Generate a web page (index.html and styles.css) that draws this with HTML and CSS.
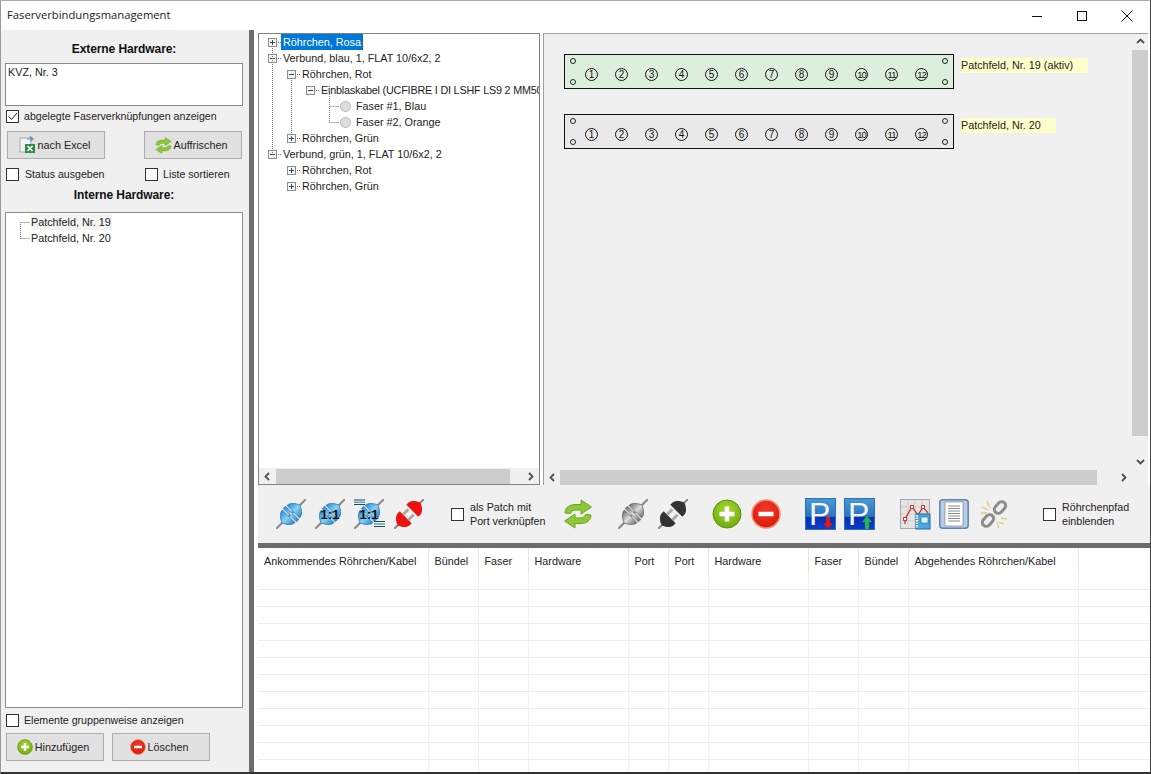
FILE: index.html
```html
<!DOCTYPE html>
<html lang="de">
<head>
<meta charset="utf-8">
<title>Faserverbindungsmanagement</title>
<link rel="stylesheet" href="styles.css">
</head>
<body>
<svg class="defs" width="0" height="0" aria-hidden="true">
  <defs>
    <linearGradient id="gb" x1="0" x2="1" y1="0" y2="0"><stop offset="0" stop-color="#2c8ad2"/><stop offset=".5" stop-color="#86d2f6"/><stop offset="1" stop-color="#2a86cc"/></linearGradient>
    <linearGradient id="gg" x1="0" x2="1" y1="0" y2="0"><stop offset="0" stop-color="#6c6c6c"/><stop offset=".5" stop-color="#dcdcdc"/><stop offset="1" stop-color="#707070"/></linearGradient>
    <linearGradient id="gp1" x1="0" x2="0" y1="0" y2="1"><stop offset="0" stop-color="#4a9ad6"/><stop offset=".58" stop-color="#2a74c0"/><stop offset=".6" stop-color="#0a2db4"/><stop offset="1" stop-color="#0a3fc8"/></linearGradient>
    <radialGradient id="gplus" cx=".5" cy=".35" r=".7"><stop offset="0" stop-color="#a8d832"/><stop offset="1" stop-color="#6aa808"/></radialGradient>
    <radialGradient id="gminus" cx=".5" cy=".35" r=".7"><stop offset="0" stop-color="#f43a2a"/><stop offset="1" stop-color="#d81808"/></radialGradient>
    <symbol id="plug" viewBox="0 0 32 32">
      <g transform="rotate(45 16 16)">
        <path d="M16 -7V39" stroke="#8a8a8a" stroke-width="2.200"/>
        <path d="M6.500 12.500C6.500 8 12 4 16 2.500C20 4 25.500 8 25.500 12.500Z" fill="url(#gb)" stroke="#1f6da8" stroke-width=".7"/>
        <rect x="6" y="14.200" width="20" height="3.600" fill="url(#gb)" stroke="#1f6da8" stroke-width=".6"/>
        <path d="M6.500 19.500C6.500 24 12 28 16 29.500C20 28 25.500 24 25.500 19.500Z" fill="url(#gb)" stroke="#1f6da8" stroke-width=".7"/>
      </g>
    </symbol>
    <symbol id="plug-grey" viewBox="0 0 32 32">
      <g transform="rotate(45 16 16)">
        <path d="M16 -7V39" stroke="#8a8a8a" stroke-width="2.200"/>
        <path d="M6.500 12.500C6.500 8 12 4 16 2.500C20 4 25.500 8 25.500 12.500Z" fill="url(#gg)" stroke="#5c5c5c" stroke-width=".7"/>
        <rect x="6" y="14.200" width="20" height="3.600" fill="url(#gg)" stroke="#5c5c5c" stroke-width=".6"/>
        <path d="M6.500 19.500C6.500 24 12 28 16 29.500C20 28 25.500 24 25.500 19.500Z" fill="url(#gg)" stroke="#5c5c5c" stroke-width=".7"/>
      </g>
    </symbol>
    <symbol id="plug-open" viewBox="0 0 32 32">
      <g transform="rotate(45 16 16)">
        <path d="M16 -7V2M16 30V39" stroke="#8a8a8a" stroke-width="2.200"/>
        <path d="M7 8C7 4 12 0 16 -1C20 0 25 4 25 8V11H7Z" fill="currentColor"/>
        <path d="M7 24C7 28 12 32 16 33C20 32 25 28 25 24V21H7Z" fill="currentColor"/>
        <path d="M12 21V13M20 21V13" stroke="#a8a8a8" stroke-width="3"/>
      </g>
    </symbol>
    <symbol id="plus" viewBox="0 0 30 30">
      <circle cx="15" cy="15" r="14" fill="url(#gplus)" stroke="#5a9408"/>
      <path d="M15 7.500V22.500M7.500 15H22.500" stroke="#fff" stroke-width="4.500"/>
    </symbol>
    <symbol id="minus" viewBox="0 0 30 30">
      <circle cx="15" cy="15" r="14" fill="url(#gminus)" stroke="#f0907a" stroke-width="1.500"/>
      <path d="M7.500 15H22.500" stroke="#fff" stroke-width="4.500"/>
    </symbol>
    <symbol id="refresh" viewBox="0 0 30 30">
      <path d="M2 14C2 8 7 5.500 13 5.500H18V1L28.500 8 18 15V11H13C10 11 8.500 12 7.500 14.500Z" fill="#8cc83a" stroke="#68a818"/>
      <path d="M28 16C28 22 23 24.500 17 24.500H12V29L1.500 22 12 15V19H17C20 19 21.500 18 22.500 15.500Z" fill="#8cc83a" stroke="#68a818"/>
    </symbol>
    <symbol id="minus-box" viewBox="0 0 9 9">
      <rect x=".5" y=".5" width="8" height="8" fill="#f4f4f4" stroke="#8e8e8e"/>
      <path d="M2 4.500H7" stroke="#444"/>
    </symbol>
    <symbol id="plus-box" viewBox="0 0 9 9">
      <rect x=".5" y=".5" width="8" height="8" fill="#f4f4f4" stroke="#8e8e8e"/>
      <path d="M2 4.500H7M4.500 2V7" stroke="#444"/>
    </symbol>
    <symbol id="ch-left" viewBox="0 0 9 9"><path d="M6 1L2.500 4.500L6 8" fill="none" stroke="#505050" stroke-width="1.800"/></symbol>
    <symbol id="ch-right" viewBox="0 0 9 9"><path d="M3 1L6.500 4.500L3 8" fill="none" stroke="#505050" stroke-width="1.800"/></symbol>
    <symbol id="ch-up" viewBox="0 0 9 9"><path d="M1 6L4.500 2.500L8 6" fill="none" stroke="#505050" stroke-width="1.800"/></symbol>
    <symbol id="ch-down" viewBox="0 0 9 9"><path d="M1 3L4.500 6.500L8 3" fill="none" stroke="#505050" stroke-width="1.800"/></symbol>
  </defs>
</svg>

<div class="window">
  <header class="titlebar">
    <span class="title">Faserverbindungsmanagement</span>
    <div class="wincontrols">
      <span class="winbtn"><svg width="12" height="12" viewBox="0 0 12 12"><path d="M1 6.500H11" stroke="#111"/></svg></span>
      <span class="winbtn"><svg width="12" height="12" viewBox="0 0 12 12"><rect x="1.500" y="1.500" width="9" height="9" fill="none" stroke="#111"/></svg></span>
      <span class="winbtn"><svg width="12" height="12" viewBox="0 0 12 12"><path d="M.5 .5L11.500 11.500M11.500 .5L.5 11.500" stroke="#111"/></svg></span>
    </div>
  </header>

  <div class="body">
    <aside class="sidebar">
      <h2 class="heading heading-first">Externe Hardware:</h2>
      <div class="textbox">KVZ, Nr. 3</div>
      <label class="check check-a"><span class="box"><svg width="11" height="11" viewBox="0 0 11 11"><path d="M1.500 5.500L4.500 8.500L10 2" fill="none" stroke="#222"/></svg></span>abgelegte Faserverknüpfungen anzeigen</label>
      <div class="btnrow btnrow-a">
        <button class="btn"><svg width="18" height="18" viewBox="0 0 18 18"><rect x="2" y="2" width="11" height="14" fill="#f4f4f4" stroke="#a8a8a8"/><path d="M9 3L14 2.500M12 .5L15 3L12 5" fill="none" stroke="#5a8fc0" stroke-width="1.200"/><rect x="7" y="8" width="10" height="9" fill="#2e8b4a"/><path d="M9.500 10L14.500 15M14.500 10L9.500 15" stroke="#fff" stroke-width="1.500"/></svg>nach Excel</button>
        <button class="btn"><svg width="17" height="17"><use href="#refresh"/></svg>Auffrischen</button>
      </div>
      <div class="checkrow">
        <label class="check"><span class="box"></span>Status ausgeben</label>
        <label class="check"><span class="box"></span>Liste sortieren</label>
      </div>
      <h2 class="heading heading-second">Interne Hardware:</h2>
      <div class="listbox">
        <svg class="connectors" width="24" height="40" aria-hidden="true"><path d="M14.500 9V26M14.500 9.500H24M14.500 25.500H24" fill="none" stroke="#777" stroke-dasharray="1 1"/></svg>
        <div class="listitem listitem-sel">Patchfeld, Nr. 19</div>
        <div class="listitem">Patchfeld, Nr. 20</div>
      </div>
      <label class="check check-b"><span class="box"></span>Elemente gruppenweise anzeigen</label>
      <div class="btnrow btnrow-b">
        <button class="btn"><svg width="16" height="16"><use href="#plus"/></svg>Hinzufügen</button>
        <button class="btn"><svg width="16" height="16"><use href="#minus"/></svg>Löschen</button>
      </div>
    </aside>

    <div class="vsplit"></div>

    <main class="main">
      <div class="top">
        <section class="tree">
          <div class="treebody">
            <svg class="connectors" width="120" height="170" aria-hidden="true">
              <path d="M13.500 12V120.500M32.500 44V104M70.500 60V88.500M17 8.500H22M17 24.500H22M36 40.500H41M55 56.500H60M70.500 72.500H80M70.500 88.500H80M36 104.500H41M17 120.500H22M36 136.500H41M36 152.500H41" fill="none" stroke="#777" stroke-dasharray="1 1"/>
            </svg>
            <div class="node"><svg class="tg" width="9" height="9"><use href="#plus-box"/></svg><span class="sel">Röhrchen, Rosa</span></div>
            <div class="node"><svg class="tg" width="9" height="9"><use href="#minus-box"/></svg><span>Verbund, blau, 1, FLAT 10/6x2, 2</span></div>
            <div class="node lv1"><svg class="tg" width="9" height="9"><use href="#minus-box"/></svg><span>Röhrchen, Rot</span></div>
            <div class="node lv2"><svg class="tg" width="9" height="9"><use href="#minus-box"/></svg><span class="longname">Einblaskabel (UCFIBRE I DI LSHF LS9 2 MM50/125 OM3)</span></div>
            <div class="node lv3"><i class="led"></i><span>Faser #1, Blau</span></div>
            <div class="node lv3"><i class="led"></i><span>Faser #2, Orange</span></div>
            <div class="node lv1"><svg class="tg" width="9" height="9"><use href="#plus-box"/></svg><span>Röhrchen, Grün</span></div>
            <div class="node"><svg class="tg" width="9" height="9"><use href="#minus-box"/></svg><span>Verbund, grün, 1, FLAT 10/6x2, 2</span></div>
            <div class="node lv1"><svg class="tg" width="9" height="9"><use href="#plus-box"/></svg><span>Röhrchen, Rot</span></div>
            <div class="node lv1"><svg class="tg" width="9" height="9"><use href="#plus-box"/></svg><span>Röhrchen, Grün</span></div>
          </div>
          <div class="hbar">
            <svg class="arrow"><use href="#ch-left"/></svg><span class="thumb thumb-tree"></span><svg class="arrow arrow-end"><use href="#ch-right"/></svg>
          </div>
        </section>

        <section class="canvas">
          <div class="canvasbody">
            <div class="patchrow">
              <div class="panel panel-active">
                <div class="holes"><i></i><i></i></div>
                <div class="ports"><b>1</b><b>2</b><b>3</b><b>4</b><b>5</b><b>6</b><b>7</b><b>8</b><b>9</b><b class="n2">10</b><b class="n2">11</b><b class="n2">12</b></div>
                <div class="holes"><i></i><i></i></div>
              </div>
              <span class="tag tag-a">Patchfeld, Nr. 19 (aktiv)</span>
            </div>
            <div class="patchrow">
              <div class="panel">
                <div class="holes"><i></i><i></i></div>
                <div class="ports"><b>1</b><b>2</b><b>3</b><b>4</b><b>5</b><b>6</b><b>7</b><b>8</b><b>9</b><b class="n2">10</b><b class="n2">11</b><b class="n2">12</b></div>
                <div class="holes"><i></i><i></i></div>
              </div>
              <span class="tag tag-b">Patchfeld, Nr. 20</span>
            </div>
          </div>
          <div class="vbar">
            <svg class="arrow-v"><use href="#ch-up"/></svg><span class="thumb thumb-v"></span><svg class="arrow-v arrow-v-end"><use href="#ch-down"/></svg>
          </div>
          <div class="hbar">
            <svg class="arrow"><use href="#ch-left"/></svg><span class="thumb thumb-canvas"></span><svg class="arrow arrow-end"><use href="#ch-right"/></svg>
          </div>
          <div class="corner"></div>
        </section>
      </div>

      <div class="toolbar">
        <svg class="ic"><use href="#plug"/></svg>
        <svg class="ic" viewBox="0 0 30 30"><use href="#plug" width="30" height="30"/><text x="15" y="20" class="onetoone">1:1</text></svg>
        <svg class="ic" viewBox="0 0 30 30"><use href="#plug" width="30" height="30"/><text x="15" y="20" class="onetoone">1:1</text><path d="M0 1H11M0 5.500H11" stroke="#1c3f9c"/><path d="M0 3.200H11" stroke="#1f8a3c"/><path d="M20 22.500H31M20 27.500H31" stroke="#1c3f9c"/><path d="M20 25H31" stroke="#1f8a3c"/></svg>
        <svg class="ic ic-red"><use href="#plug-open"/></svg>
        <label class="check toolcheck tc-a"><span class="box"></span><span class="two">als Patch mit<br>Port verknüpfen</span></label>
        <svg class="ic ic-refresh"><use href="#refresh"/></svg>
        <svg class="ic ic-greyplug"><use href="#plug-grey"/></svg>
        <svg class="ic ic-black"><use href="#plug-open"/></svg>
        <svg class="ic ic-plus"><use href="#plus"/></svg>
        <svg class="ic"><use href="#minus"/></svg>
        <svg class="ic-p ic-p1" width="31" height="32" viewBox="0 0 31 32">
          <rect x=".5" y=".5" width="30" height="31" fill="url(#gp1)" stroke="#2f6fb8"/>
          <text x="4" y="27" class="ptxt">P</text>
          <path d="M21 19H25V25H28L23 31 18 25H21Z" fill="#e01818"/>
        </svg>
        <svg class="ic-p ic-p2" width="31" height="32" viewBox="0 0 31 32">
          <rect x=".5" y=".5" width="30" height="31" fill="url(#gp1)" stroke="#2f6fb8"/>
          <text x="4" y="27" class="ptxt">P</text>
          <path d="M21 31H25V24H28L23 18 18 24H21Z" fill="#22b84a"/>
        </svg>
        <svg class="ic ic-chart" viewBox="0 0 30 30">
          <rect x=".5" y=".5" width="29" height="29" fill="#e4e4e4" stroke="#a8a8a8"/>
          <path d="M8 1V29M15 1V29M22 1V29M1 8H29M1 15H29M1 22H29" stroke="#cfcfcf"/>
          <path d="M5 25L5 20L12 8L18 16L23 8L28 14" fill="none" stroke="#c83838" stroke-width="1.300"/>
          <rect x="3.500" y="18.500" width="3" height="3" fill="#fff" stroke="#c83838"/>
          <rect x="10.500" y="6.500" width="3" height="3" fill="#fff" stroke="#c83838"/>
          <rect x="21.500" y="6.500" width="3" height="3" fill="#fff" stroke="#c83838"/>
          <rect x="16" y="15" width="14" height="15" fill="#4aa8dc" stroke="#1c6ca8"/>
          <path d="M17 16V29" stroke="#fff" stroke-width="2" stroke-dasharray="1.500 1"/>
          <rect x="21" y="18" width="7" height="6" fill="#dff0fa" stroke="#1c6ca8" stroke-width=".6"/>
        </svg>
        <svg class="ic" viewBox="0 0 30 30">
          <rect x=".8" y=".8" width="28.400" height="28.400" rx="3" fill="#b8cde4" stroke="#5f86ad" stroke-width="1.500"/>
          <rect x="6" y="3" width="18" height="24" fill="#fff" stroke="#7a7a7a" stroke-width=".6"/>
          <path d="M9 7H21M9 9.500H21M9 12H21M9 14.500H21M9 17H21M9 19.500H21M9 22H21" stroke="#8a8a8a"/>
        </svg>
        <svg class="ic ic-link" viewBox="0 0 30 30">
          <g fill="none" stroke="#8c8c8c" stroke-width="3">
            <rect x="17" y="2" width="8" height="13" rx="4" transform="rotate(42 21 8.500)"/>
            <rect x="5" y="15" width="8" height="13" rx="4" transform="rotate(42 9 21.500)"/>
          </g>
          <path d="M3 8L9 11M8 2L11 9M2 14H8M19 23L25 25M22 19L28 20M18 24L20 29" stroke="#e8c878" stroke-width="1.300"/>
        </svg>
        <label class="check toolcheck tc-b"><span class="box"></span><span class="two">Röhrchenpfad<br>einblenden</span></label>
      </div>

      <div class="hsplit"></div>

      <table class="grid">
        <colgroup>
          <col class="c170"><col class="c50"><col class="c50"><col class="c100"><col class="c40"><col class="c40"><col class="c100"><col class="c50"><col class="c50"><col class="c170"><col>
        </colgroup>
        <thead>
          <tr><th>Ankommendes Röhrchen/Kabel</th><th>Bündel</th><th>Faser</th><th>Hardware</th><th>Port</th><th>Port</th><th>Hardware</th><th>Faser</th><th>Bündel</th><th>Abgehendes Röhrchen/Kabel</th><th></th></tr>
        </thead>
        <tbody>
          <tr><td></td><td></td><td></td><td></td><td></td><td></td><td></td><td></td><td></td><td></td><td></td></tr>
          <tr><td></td><td></td><td></td><td></td><td></td><td></td><td></td><td></td><td></td><td></td><td></td></tr>
          <tr><td></td><td></td><td></td><td></td><td></td><td></td><td></td><td></td><td></td><td></td><td></td></tr>
          <tr><td></td><td></td><td></td><td></td><td></td><td></td><td></td><td></td><td></td><td></td><td></td></tr>
          <tr><td></td><td></td><td></td><td></td><td></td><td></td><td></td><td></td><td></td><td></td><td></td></tr>
          <tr><td></td><td></td><td></td><td></td><td></td><td></td><td></td><td></td><td></td><td></td><td></td></tr>
          <tr><td></td><td></td><td></td><td></td><td></td><td></td><td></td><td></td><td></td><td></td><td></td></tr>
          <tr><td></td><td></td><td></td><td></td><td></td><td></td><td></td><td></td><td></td><td></td><td></td></tr>
          <tr><td></td><td></td><td></td><td></td><td></td><td></td><td></td><td></td><td></td><td></td><td></td></tr>
          <tr><td></td><td></td><td></td><td></td><td></td><td></td><td></td><td></td><td></td><td></td><td></td></tr>
          <tr><td></td><td></td><td></td><td></td><td></td><td></td><td></td><td></td><td></td><td></td><td></td></tr>
          <tr class="lastrow"><td></td><td></td><td></td><td></td><td></td><td></td><td></td><td></td><td></td><td></td><td></td></tr>
        </tbody>
      </table>
    </main>
  </div>
</div>
</body>
</html>
```
FILE: styles.css
```css
* { box-sizing: border-box; }
html, body { margin: 0; padding: 0; height: 100%; overflow: hidden; background: #fff; }
body { font: 10.800px/14px "Liberation Sans", Arial, sans-serif; color: #222; }
.defs { position: absolute; }

.window {
  width: 1151px; height: 774px;
  display: flex; flex-direction: column;
  border-top: 1px solid #a9a9a9;
  border-left: 1px solid #9a9a9a;
  border-right: 1px solid #444;
  border-bottom: 2px solid #333;
  background: #fff;
}
.titlebar { height: 29px; flex: none; display: flex; align-items: center; justify-content: space-between; background: #fff; }
.title { font: 11.250px/16px "Open Sans", sans-serif; padding: 0 0 2px 6px; color: #222; }
.wincontrols { display: flex; padding-right: 1px; }
.winbtn { width: 45px; height: 29px; display: flex; align-items: center; justify-content: center; }

.body { flex: 1; display: flex; min-height: 0; }

/* sidebar */
.sidebar { width: 248px; flex: none; background: #f0f0f0; display: flex; flex-direction: column; padding: 0 6px 11px 4px; }
.heading { margin: 0; font: bold 12px/14px "Liberation Sans", sans-serif; letter-spacing: -.1px; text-align: center; color: #111; }
.heading-first { margin-top: 12px; }
.heading-second { margin-top: 7px; }
.textbox { height: 43px; margin-top: 7px; background: #fff; border: 1px solid #8a8a8a; padding: 1px 2px; }
.check { display: flex; align-items: center; gap: 6px; white-space: nowrap; font-size: 10.600px; }
.box { width: 13px; height: 13px; flex: none; background: #fff; border: 1px solid #333; display: flex; align-items: center; justify-content: center; }
.check-a { margin-top: 3px; margin-left: 1px; gap: 5px; }
.checkrow { display: flex; margin-top: 8px; margin-left: 1px; }
.checkrow .check:first-child { width: 139px; flex: none; }
.checkrow .check + .check { gap: 5px; }
.btnrow { display: flex; }
.btnrow-a { margin-top: 8px; margin-left: 2px; gap: 39px; }
.btnrow-b { margin-top: 6px; margin-left: 1px; gap: 8px; }
.btn {
  width: 98px; height: 28px; padding: 0 4px 0 0;
  display: flex; align-items: center; justify-content: center; gap: 2px;
  background: #e1e1e1; border: 1px solid #adadad;
  font: 10.800px/14px "Liberation Sans", sans-serif; color: #222;
}
.listbox { position: relative; flex: 1; margin-top: 10px; background: #fff; border: 1px solid #8a8a8a; padding: 1px 0 0 25px; }
.listitem { height: 16px; line-height: 16px; width: max-content; }
.listitem-sel { background: #f3f3f3; padding-right: 1px; }
.connectors { position: absolute; left: 0; top: 0; pointer-events: none; }
.check-b { margin-top: 5px; margin-left: 1px; gap: 5px; }

.vsplit { width: 5px; flex: none; background: #6c6c6c; }

/* main */
.main { flex: 1; min-width: 0; display: flex; flex-direction: column; padding-left: 4px; background: #fff; }
.top { height: 455px; flex: none; display: flex; gap: 3px; padding: 3px 2px 0 0; background: #fff; }

.tree { width: 282px; flex: none; display: flex; flex-direction: column; border: 1px solid #828282; background: #fff; }
.treebody { flex: 1; position: relative; overflow: hidden; }
.node { height: 16px; display: flex; align-items: center; white-space: nowrap; padding-left: 9px; }
.tg { flex: none; margin-right: 4px; }
.node span { padding: 0 2px; line-height: 16px; }
.node .longname { letter-spacing: -.2px; }
.lv1 { padding-left: 28px; }
.lv2 { padding-left: 47px; }
.lv3 { padding-left: 81px; }
.sel { background: #0078d7; color: #fff; }
.led { width: 11px; height: 11px; flex: none; border-radius: 50%; margin-right: 3px; background: #ddd; border: 1px solid #bbb; }

.hbar { height: 16px; flex: none; display: flex; align-items: center; background: #f0f0f0; }
.arrow { width: 9px; height: 9px; flex: none; margin: 0 4px; }
.arrow-end { margin-left: auto; margin-right: 4px; }
.thumb { display: block; height: 15px; background: #cdcdcd; }
.thumb-tree { width: 234px; }
.thumb-canvas { width: 537px; margin-left: -1px; }

.canvas { flex: 1; display: grid; grid-template-columns: 1fr 16px; grid-template-rows: 1fr 16px; border-top: 1px solid #a0a0a0; border-left: 1px solid #a0a0a0; background: #f0f0f0; }
.canvasbody { padding: 20px 0 0 20px; background: #f0f0f0; }
.patchrow { display: flex; gap: 7px; margin-bottom: 25px; }
.panel { width: 390px; height: 35px; border: 1px solid #111; padding: 0 5px; display: flex; background: #e9e9e9; }
.panel-active { background: #dcefdc; }
.holes { width: 6px; flex: none; display: flex; flex-direction: column; justify-content: space-between; padding: 3px 0; }
.holes i { width: 6px; height: 6px; border-radius: 50%; border: 1px solid #222; background: transparent; display: block; }
.ports { display: flex; gap: 17px; margin: 12.500px auto 0 9px; height: 13px; }
.ports b { width: 13px; height: 13px; border-radius: 50%; border: 1px solid #111; font: 10px/11px "Liberation Sans", sans-serif; text-align: center; color: #111; }
.ports .n2 { letter-spacing: -1px; font-size: 9.500px; }
.tag { height: 15px; margin-top: 4px; line-height: 15px; background: #ffffcc; white-space: nowrap; }
.tag-a { width: 127px; }
.tag-b { width: 95px; }
.vbar { display: flex; flex-direction: column; background: #f0f0f0; }
.arrow-v { width: 9px; height: 9px; flex: none; margin: 3px 4px 4px; }
.arrow-v-end { margin-top: auto; margin-bottom: 3px; }
.thumb-v { height: 386px; }
.corner { background: #f0f0f0; }

/* toolbar */
.toolbar { height: 58px; flex: none; display: flex; align-items: center; gap: 9px; padding-left: 18px; background: #f0f0f0; }
.ic { width: 30px; height: 30px; flex: none; overflow: visible; }
.ic-red { color: #ee1111; margin-left: 1px; }
.ic-black { color: #333; margin-left: 1px; }
.toolcheck { font-size: 10.700px; line-height: 14px; }
.two { display: block; }
.tc-a { margin-left: 18px; width: 95px; }
.ic-refresh { margin-left: 8px; }
.ic-greyplug { margin-left: 16px; }
.ic-plus { margin-left: 15px; }
.ic-p { flex: none; overflow: visible; }
.ic-p1 { margin-left: 15px; }
.ic-p2 { margin-left: -1px; }
.ic-chart { margin-left: 16px; }
.ic-link { margin-left: 1px; }
.tc-b { margin-left: 25px; }
.onetoone { font: bold 13px "Liberation Sans", sans-serif; fill: #111; text-anchor: middle; }
.ptxt { font: 32px/32px "Liberation Sans", sans-serif; fill: #f4f8ff; }

.hsplit { height: 5px; flex: none; background: #6c6c6c; }

/* table */
.grid { width: 100%; flex: none; table-layout: fixed; border-collapse: collapse; background: #fff; }
.c170 { width: 170px; }
.c100 { width: 100px; }
.c50 { width: 50px; }
.c40 { width: 40px; }
.grid th { height: 24px; padding: 2px 0 0 6px; font-weight: normal; text-align: left; white-space: nowrap; overflow: hidden; border-right: 1px solid #e4e4e4; }
.grid td { height: 17px; padding: 0; border-right: 1px solid #f0f0f0; border-bottom: 1px solid #ececec; }
.grid .lastrow td { height: 13px; border-bottom: 0; }
.grid th:last-child, .grid td:last-child { border-right: 0; }
```
